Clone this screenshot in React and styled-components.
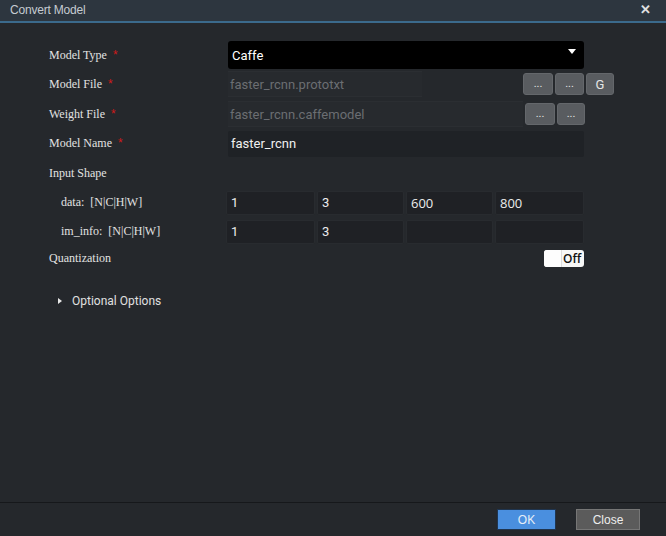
import React from "react";
import styled, { createGlobalStyle } from "styled-components";

const Global = createGlobalStyle`
  html, body { margin: 0; padding: 0; background: #25282c; }
  #root { width: 666px; height: 536px; }
  * { box-sizing: border-box; }
`;

const Dialog = styled.div`
  width: 666px;
  height: 536px;
  display: flex;
  flex-direction: column;
  background: #25282c;
  overflow: hidden;
`;

const TitleBar = styled.div`
  height: 23px;
  flex: none;
  display: flex;
  align-items: center;
  justify-content: space-between;
  padding: 0 15px 2px 10px;
  background: #2d363f;
  border-bottom: 2px solid #3b6a8c;
  font-family: "Liberation Sans", Arial, sans-serif;
  font-size: 12px;
  color: #c5cbd1;
  letter-spacing: -0.2px;
`;

const CloseX = styled.span`
  font-size: 13px;
  font-weight: bold;
  color: #e0e0e0;
`;

const Body = styled.div`
  flex: 1;
  padding: 18px 82px 0 49px;
  display: flex;
  flex-direction: column;
`;

const Row = styled.div`
  height: ${(p) => p.h}px;
  margin-top: ${(p) => p.mt || 0}px;
  display: flex;
  align-items: center;
  flex: none;
  & > * { flex-shrink: 0; }
`;

const Label = styled.div`
  width: ${(p) => (p.indent ? 165 : 177)}px;
  margin-left: ${(p) => (p.indent ? 12 : 0)}px;
  font-family: "Liberation Serif", "Times New Roman", serif;
  font-size: 12px;
  color: #e2e2e2;
  white-space: pre;
`;

const Req = styled.span`
  color: #d01a1a;
  margin-left: 6px;
  font-family: "Liberation Sans", Arial, sans-serif;
`;

const Select = styled.div`
  width: 356px;
  height: 28px;
  margin-left: 2px;
  background: #000;
  border-radius: 3px;
  display: flex;
  align-items: center;
  justify-content: space-between;
  padding: 0 8px 0 4px;
  font-family: Roboto, sans-serif;
  font-size: 13px;
  color: #fff;
`;

const Caret = styled.span`
  width: 0;
  height: 0;
  border-left: 4px solid transparent;
  border-right: 4px solid transparent;
  border-top: 5px solid #fff;
  margin-top: -8px;
`;

const FileInput = styled.div`
  width: ${(p) => p.w}px;
  height: 26px;
  margin-left: 2px;
  background: #272a2e;
  border-top: 1px solid #2b2e32;
  border-bottom: 1px solid #2b2e32;
  display: flex;
  align-items: center;
  padding-left: 2px;
  font-family: Roboto, sans-serif;
  font-size: 13px;
  color: #6b6e72;
`;

const TextInput = styled.div`
  width: 356px;
  height: 26px;
  margin-left: 2px;
  background: #1f2226;
  border-radius: 2px;
  display: flex;
  align-items: center;
  padding-left: 3px;
  font-family: Roboto, sans-serif;
  font-size: 13px;
  color: #f0f0f0;
`;

const BtnGroup = styled.div`
  display: flex;
  gap: 2px;
  margin-left: ${(p) => p.ml}px;
`;

const SmallBtn = styled.div`
  width: ${(p) => p.w}px;
  height: 22px;
  background: #595c60;
  border: 1px solid #64676b;
  border-radius: 3px;
  display: flex;
  align-items: center;
  justify-content: center;
  font-family: Roboto, sans-serif;
  font-size: ${(p) => (p.big ? 13 : 11)}px;
  color: #e6e6e6;
  padding-bottom: ${(p) => (p.big ? 0 : 2)}px;
`;

const ShapeGrid = styled.div`
  display: grid;
  grid-template-columns: 89px 87px 87px 89px;
  gap: 2px;
  width: 358px;
`;

const ShapeCell = styled.div`
  height: 24px;
  background: #1f2125;
  border: 1px solid #282b2f;
  border-radius: 2px;
  display: flex;
  align-items: center;
  padding-left: 4px;
  font-family: ${(p) => (p.alt ? '"Open Sans"' : "Roboto")}, sans-serif;
  font-size: 13px;
  color: #ececec;
`;

const Spacer = styled.div`
  flex: 1;
`;

const Toggle = styled.div`
  width: 40px;
  height: 17px;
  background: #f7f7f7;
  border-radius: 3px;
  display: flex;
  align-items: center;
  overflow: hidden;
`;

const Knob = styled.div`
  width: 18px;
  height: 100%;
  background: #fdfdfd;
  border-right: 1px solid #dcdcdc;
`;

const ToggleText = styled.span`
  font-family: "Open Sans", sans-serif;
  font-size: 12px;
  font-weight: 600;
  color: #111;
  margin-left: 1px;
`;

const Expander = styled.div`
  display: flex;
  align-items: center;
  margin-left: 9px;
  font-family: Roboto, sans-serif;
  font-size: 12px;
  color: #e0e0e0;
`;

const Arrow = styled.span`
  width: 0;
  height: 0;
  border-top: 3.5px solid transparent;
  border-bottom: 3.5px solid transparent;
  border-left: 4px solid #e8e8e8;
  margin-right: 10px;
`;

const Footer = styled.div`
  height: 34px;
  flex: none;
  border-top: 1px solid #16181b;
  display: flex;
  align-items: center;
  justify-content: flex-end;
  gap: 20px;
  padding: 0 26px 0 0;
  background: #25282c;
`;

const FooterBtn = styled.div`
  width: ${(p) => p.w}px;
  height: 21px;
  display: flex;
  align-items: center;
  justify-content: center;
  font-family: "Liberation Sans", Arial, sans-serif;
  font-size: 12px;
  background: ${(p) => (p.primary ? "#4a8fdf" : "#5b5b5b")};
  border: 1px solid ${(p) => (p.primary ? "#1f3550" : "#767676")};
  color: ${(p) => (p.primary ? "#e6eef8" : "#eeeeee")};
`;

export default function App() {
  return (
    <>
      <Global />
      <Dialog>
        <TitleBar>
          <span>Convert Model</span>
          <CloseX>✕</CloseX>
        </TitleBar>
        <Body>
          <Row h={28}>
            <Label>
              Model Type<Req>*</Req>
            </Label>
            <Select>
              <span>Caffe</span>
              <Caret />
            </Select>
          </Row>
          <Row h={30}>
            <Label>
              Model File<Req>*</Req>
            </Label>
            <FileInput w={194}>faster_rcnn.prototxt</FileInput>
            <BtnGroup ml={101}>
              <SmallBtn w={30}>...</SmallBtn>
              <SmallBtn w={29}>...</SmallBtn>
              <SmallBtn w={28} big>G</SmallBtn>
            </BtnGroup>
          </Row>
          <Row h={30}>
            <Label>
              Weight File<Req>*</Req>
            </Label>
            <FileInput w={295}>faster_rcnn.caffemodel</FileInput>
            <BtnGroup ml={2}>
              <SmallBtn w={30}>...</SmallBtn>
              <SmallBtn w={28}>...</SmallBtn>
            </BtnGroup>
          </Row>
          <Row h={29}>
            <Label>
              Model Name<Req>*</Req>
            </Label>
            <TextInput>faster_rcnn</TextInput>
          </Row>
          <Row h={30}>
            <Label>Input Shape</Label>
          </Row>
          <Row h={29}>
            <Label indent>{"data:  [N|C|H|W]"}</Label>
            <ShapeGrid>
              <ShapeCell>1</ShapeCell>
              <ShapeCell>3</ShapeCell>
              <ShapeCell alt>600</ShapeCell>
              <ShapeCell alt>800</ShapeCell>
            </ShapeGrid>
          </Row>
          <Row h={29}>
            <Label indent>{"im_info:  [N|C|H|W]"}</Label>
            <ShapeGrid>
              <ShapeCell>1</ShapeCell>
              <ShapeCell>3</ShapeCell>
              <ShapeCell />
              <ShapeCell />
            </ShapeGrid>
          </Row>
          <Row h={24}>
            <Label>Quantization</Label>
            <Spacer />
            <Toggle>
              <Knob />
              <ToggleText>Off</ToggleText>
            </Toggle>
          </Row>
          <Row h={24} mt={19}>
            <Expander>
              <Arrow />
              Optional Options
            </Expander>
          </Row>
        </Body>
        <Footer>
          <FooterBtn primary w={59}>OK</FooterBtn>
          <FooterBtn w={64}>Close</FooterBtn>
        </Footer>
      </Dialog>
    </>
  );
}
